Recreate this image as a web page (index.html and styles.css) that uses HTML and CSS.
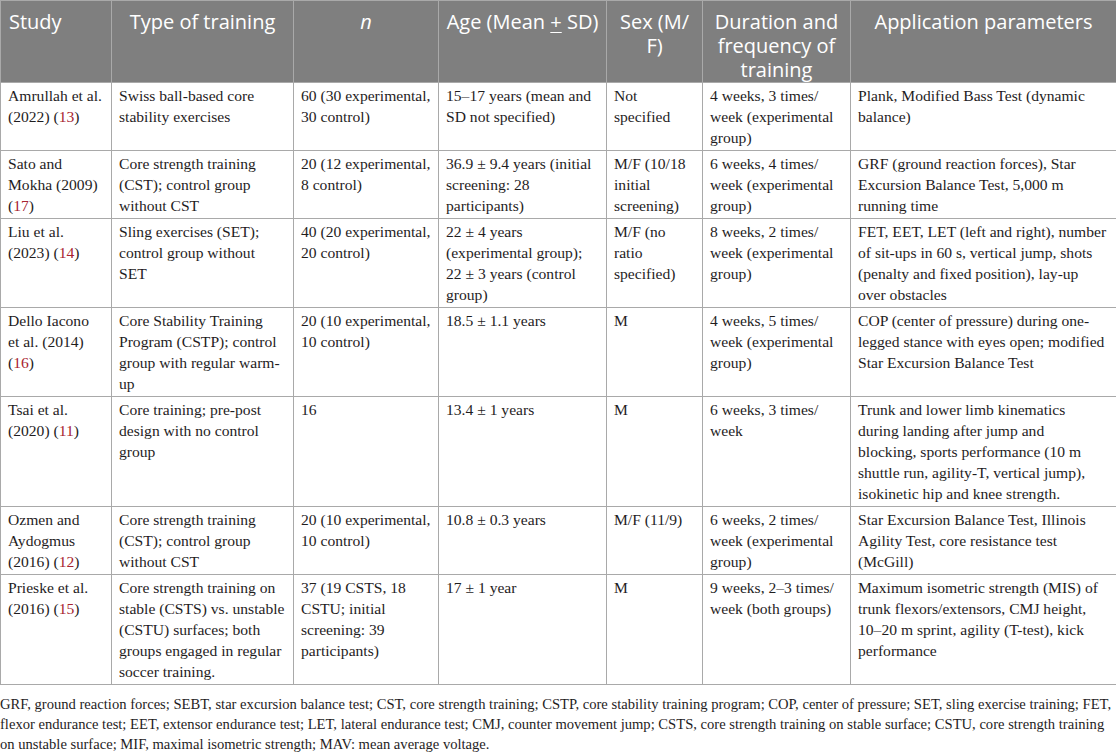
FILE: index.html
```html
<!DOCTYPE html>
<html lang="en">
<head>
  <meta charset="UTF-8" />
  <title>Core training studies</title>
  <link rel="stylesheet" href="styles.css">
</head>
<body>
  <table class="studies">
    <colgroup>
      <col class="c-study">
      <col class="c-type">
      <col class="c-n">
      <col class="c-age">
      <col class="c-sex">
      <col class="c-dur">
      <col class="c-app">
    </colgroup>
    <thead>
      <tr>
        <th class="left">Study</th>
        <th>Type of training</th>
        <th><em>n</em></th>
        <th class="nowrap">Age (Mean <u>+</u> SD)</th>
        <th>Sex (M/<br>F)</th>
        <th>Duration and frequency of training</th>
        <th>Application parameters</th>
      </tr>
    </thead>
    <tbody>
      <tr>
        <td>Amrullah et al.<br>(2022) (<a class="ref">13</a>)</td>
        <td>Swiss ball-based core<br>stability exercises</td>
        <td>60 (30 experimental,<br>30 control)</td>
        <td>15–17 years (mean and<br>SD not specified)</td>
        <td>Not<br>specified</td>
        <td>4 weeks, 3 times/<br>week (experimental<br>group)</td>
        <td>Plank, Modified Bass Test (dynamic<br>balance)</td>
      </tr>
      <tr>
        <td>Sato and<br>Mokha (2009)<br>(<a class="ref">17</a>)</td>
        <td>Core strength training<br>(CST); control group<br>without CST</td>
        <td>20 (12 experimental,<br>8 control)</td>
        <td>36.9 ± 9.4 years (initial<br>screening: 28<br>participants)</td>
        <td>M/F (10/18<br>initial<br>screening)</td>
        <td>6 weeks, 4 times/<br>week (experimental<br>group)</td>
        <td>GRF (ground reaction forces), Star<br>Excursion Balance Test, 5,000 m<br>running time</td>
      </tr>
      <tr>
        <td>Liu et al.<br>(2023) (<a class="ref">14</a>)</td>
        <td>Sling exercises (SET);<br>control group without<br>SET</td>
        <td>40 (20 experimental,<br>20 control)</td>
        <td>22 ± 4 years<br>(experimental group);<br>22 ± 3 years (control<br>group)</td>
        <td>M/F (no<br>ratio<br>specified)</td>
        <td>8 weeks, 2 times/<br>week (experimental<br>group)</td>
        <td>FET, EET, LET (left and right), number<br>of sit-ups in 60 s, vertical jump, shots<br>(penalty and fixed position), lay-up<br>over obstacles</td>
      </tr>
      <tr>
        <td>Dello Iacono<br>et al. (2014)<br>(<a class="ref">16</a>)</td>
        <td>Core Stability Training<br>Program (CSTP); control<br>group with regular warm-<br>up</td>
        <td>20 (10 experimental,<br>10 control)</td>
        <td>18.5 ± 1.1 years</td>
        <td>M</td>
        <td>4 weeks, 5 times/<br>week (experimental<br>group)</td>
        <td>COP (center of pressure) during one-<br>legged stance with eyes open; modified<br>Star Excursion Balance Test</td>
      </tr>
      <tr>
        <td>Tsai et al.<br>(2020) (<a class="ref">11</a>)</td>
        <td>Core training; pre-post<br>design with no control<br>group</td>
        <td>16</td>
        <td>13.4 ± 1 years</td>
        <td>M</td>
        <td>6 weeks, 3 times/<br>week</td>
        <td>Trunk and lower limb kinematics<br>during landing after jump and<br>blocking, sports performance (10 m<br>shuttle run, agility-T, vertical jump),<br>isokinetic hip and knee strength.</td>
      </tr>
      <tr>
        <td>Ozmen and<br>Aydogmus<br>(2016) (<a class="ref">12</a>)</td>
        <td>Core strength training<br>(CST); control group<br>without CST</td>
        <td>20 (10 experimental,<br>10 control)</td>
        <td>10.8 ± 0.3 years</td>
        <td>M/F (11/9)</td>
        <td>6 weeks, 2 times/<br>week (experimental<br>group)</td>
        <td>Star Excursion Balance Test, Illinois<br>Agility Test, core resistance test<br>(McGill)</td>
      </tr>
      <tr>
        <td>Prieske et al.<br>(2016) (<a class="ref">15</a>)</td>
        <td>Core strength training on<br>stable (CSTS) vs. unstable<br>(CSTU) surfaces; both<br>groups engaged in regular<br>soccer training.</td>
        <td>37 (19 CSTS, 18<br>CSTU; initial<br>screening: 39<br>participants)</td>
        <td>17 ± 1 year</td>
        <td>M</td>
        <td>9 weeks, 2–3 times/<br>week (both groups)</td>
        <td>Maximum isometric strength (MIS) of<br>trunk flexors/extensors, CMJ height,<br>10–20 m sprint, agility (T-test), kick<br>performance</td>
      </tr>
    </tbody>
  </table>

  <p class="notes">GRF, ground reaction forces; SEBT, star excursion balance test; CST, core strength training; CSTP, core stability training program; COP, center of pressure; SET, sling exercise training; FET, flexor endurance test; EET, extensor endurance test; LET, lateral endurance test; CMJ, counter movement jump; CSTS, core strength training on stable surface; CSTU, core strength training on unstable surface; MIF, maximal isometric strength; MAV: mean average voltage.</p>
</body>
</html>
```

FILE: styles.css
```css
body {
  margin: 0;
  background: #fff;
  color: #1f1d1e;
  font-family: 'Liberation Serif', 'Times New Roman', serif;
  font-size: 15.6px;
}
.studies {
  width: 1116px;
  border-collapse: collapse;
  table-layout: fixed;
}
.c-study { width: 111px; }
.c-type { width: 182px; }
.c-n { width: 145px; }
.c-age { width: 168px; }
.c-sex { width: 96px; }
.c-dur { width: 148px; }
.c-app { width: 266px; }

.studies th {
  background: #7f7f7f;
  color: #fff;
  font-family: 'Open Sans', 'Noto Sans', sans-serif;
  font-weight: normal;
  font-size: 20px;
  line-height: 24px;
  text-align: center;
  vertical-align: top;
  padding: 9px 3px 0 3px;
  border: 1px solid #a9a9a9;
}
.studies th.left {
  text-align: left;
  padding-left: 8px;
}
.studies th.nowrap {
  white-space: nowrap;
}
.studies th u {
  text-decoration-thickness: 1px;
  text-underline-offset: 3px;
}
.studies td {
  vertical-align: top;
  line-height: 21px;
  padding: 2px 2px 2px 7px;
  border: 1px solid #a9a9a9;
}
.ref {
  color: #a8232f;
}
.notes {
  margin: 9px 0 0 0;
  font-size: 14.6px;
  line-height: 20px;
}
```
